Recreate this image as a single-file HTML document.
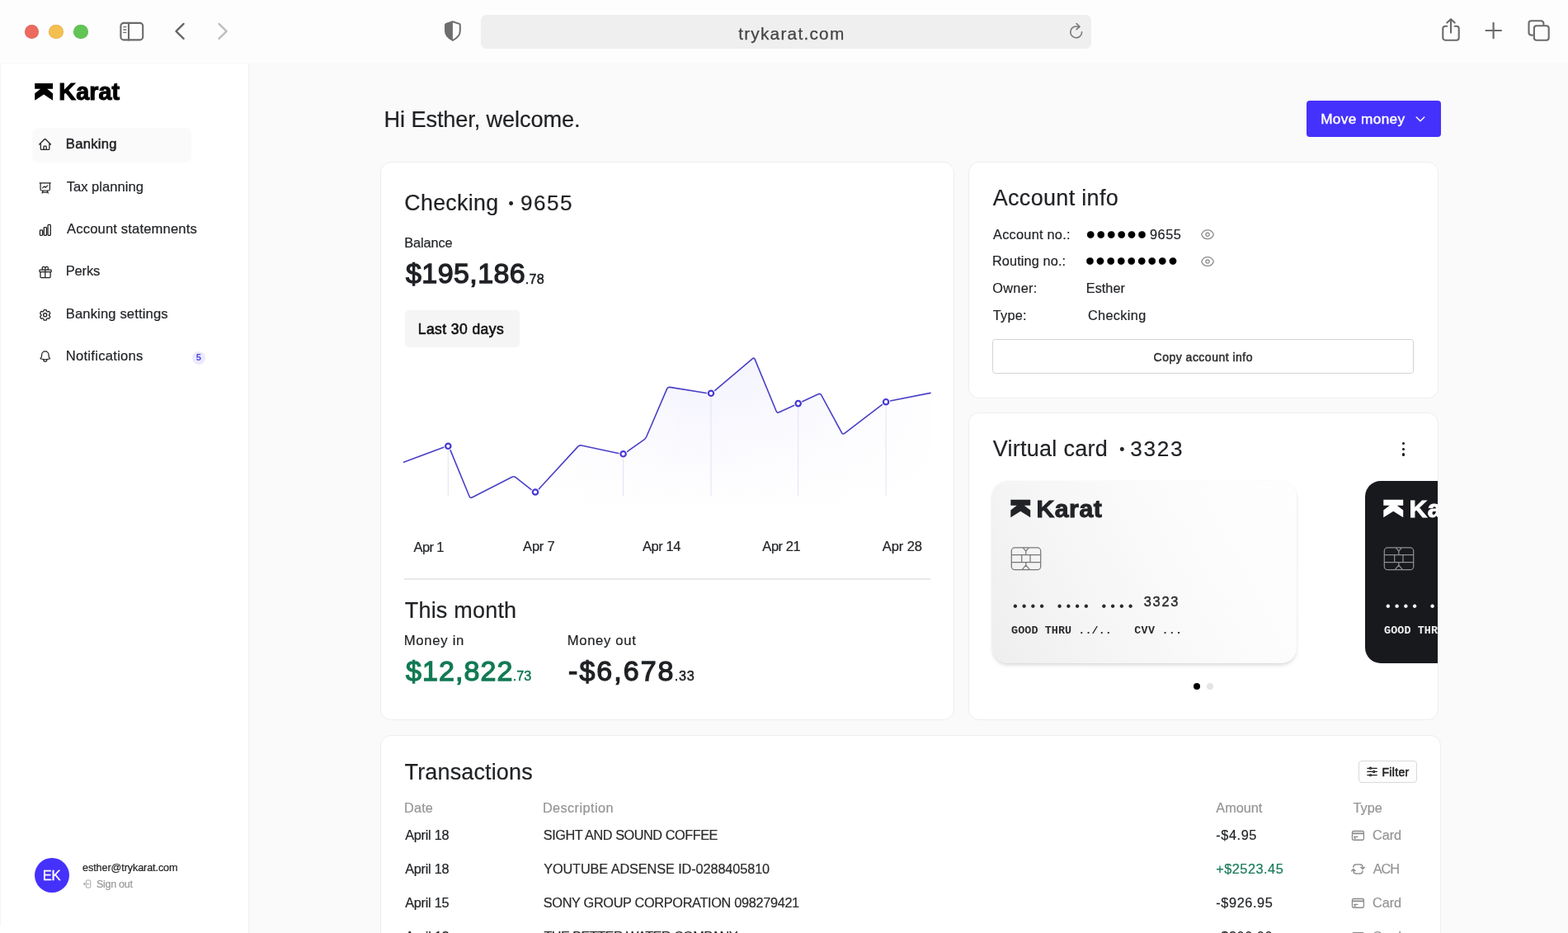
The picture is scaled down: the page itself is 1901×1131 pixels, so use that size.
<!DOCTYPE html>
<html lang="en">
<head>
<meta charset="utf-8">
<title>Karat - Banking</title>
<style>
*{box-sizing:border-box;margin:0;padding:0}
html,body{width:1901px;height:1131px;overflow:hidden}
body{position:relative;background:#fafafa;font-family:"Liberation Sans",Arial,sans-serif;color:#1f2124;-webkit-font-smoothing:antialiased}
.t{position:absolute;white-space:pre;line-height:1;display:block;font-weight:400;text-decoration:none}
.ic{position:absolute;display:block;overflow:visible}
.abs{position:absolute}
.page{position:absolute;left:0;top:0;width:1901px;height:1131px;overflow:hidden;will-change:transform}
.chrome{position:absolute;left:0;top:0;width:1901px;height:76px;background:#fdfdfd}
.sidebar{position:absolute;left:0;top:76px;width:302px;height:1055px;background:#fff;border-right:1px solid #f0f0f0;border-top:1px solid #f8f8f8}
.main{position:absolute;left:302px;top:76px;width:1599px;height:1055px;background:#fafafa}
.card{position:absolute;background:#fff;border:1px solid #eeeeee;border-radius:13px}
</style>
</head>
<body>
<div class="page">

<header class="chrome">
<div class="abs" style="left:29.9px;top:29.6px;width:17.6px;height:17.6px;border-radius:50%;background:#ed6a5e;box-shadow:inset 0 0 0 .5px rgba(0,0,0,.12)"></div>
<div class="abs" style="left:59.4px;top:29.6px;width:17.6px;height:17.6px;border-radius:50%;background:#f5bf4f;box-shadow:inset 0 0 0 .5px rgba(0,0,0,.12)"></div>
<div class="abs" style="left:89px;top:29.6px;width:17.6px;height:17.6px;border-radius:50%;background:#61c554;box-shadow:inset 0 0 0 .5px rgba(0,0,0,.12)"></div>
<svg class="ic" style="left:144px;top:25px" width="32" height="26" viewBox="144 25 32 26" fill="none" stroke="#6b6b6b" stroke-width="2.1" stroke-linecap="round"><rect x="146.4" y="27.9" width="26.8" height="20.5" rx="3.6"/><path d="M156 27.9V48.4"/><path d="M149.8 32.7H152.8M149.8 36H152.8M149.8 39.4H152.8" stroke-width="1.3"/></svg>
<svg class="ic" style="left:205px;top:25px" width="26" height="26" viewBox="205 25 26 26" fill="none" stroke="#666" stroke-width="2.3" stroke-linecap="round" stroke-linejoin="round"><path d="M222.6 28.9L213.5 37.9L222.6 46.9"/></svg>
<svg class="ic" style="left:257px;top:25px" width="26" height="26" viewBox="257 25 26 26" fill="none" stroke="#bdbdbd" stroke-width="2.3" stroke-linecap="round" stroke-linejoin="round"><path d="M265.5 28.9L274.6 37.9L265.5 46.9"/></svg>
<svg class="ic" style="left:536px;top:23px" width="26" height="30" viewBox="536 23 26 30"><path d="M548.9 26.2L556.9 28.9Q557.8 29.2 557.8 30.2V37.6C557.8 42.6 554.2 46.4 548.9 48.9C543.6 46.4 540 42.6 540 37.6V30.2Q540 29.2 540.9 28.9Z" fill="none" stroke="#6e6e6e" stroke-width="2" stroke-linejoin="round"/><path d="M548.9 26.2L540.9 28.9Q540 29.2 540 30.2V37.6C540 42.6 543.6 46.4 548.9 48.9Z" fill="#6e6e6e"/></svg>
<div class="abs" style="left:583.3px;top:18px;width:739.5px;height:41px;border-radius:7px;background:#efefef"></div>
<span class="t" style="left:895.14px;top:31.00px;font-size:20.8px;letter-spacing:1.245px;-webkit-text-stroke:0.25px currentColor;color:#444;">trykarat.com</span>
<svg class="ic" style="left:1294px;top:26px" width="22" height="24" viewBox="1294 26 22 24" fill="none" stroke="#777" stroke-width="1.6" stroke-linecap="round" stroke-linejoin="round"><path d="M1311.6 38.9A6.9 6.9 0 1 1 1307.6 32.6"/><path d="M1305.2 28.6L1309 32.3L1305 35.6"/></svg>
<svg class="ic" style="left:1745px;top:20px" width="28" height="32" viewBox="1745 20 28 32" fill="none" stroke="#6b6b6b" stroke-width="2.1" stroke-linecap="round" stroke-linejoin="round"><path d="M1754.3 31.7H1752.2A2.9 2.9 0 0 0 1749.3 34.6V45.8A2.9 2.9 0 0 0 1752.2 48.7H1765.8A2.9 2.9 0 0 0 1768.7 45.8V34.6A2.9 2.9 0 0 0 1765.8 31.7H1763.7"/><path d="M1759 39.6V23.4M1754.3 27.6L1759 23.2L1763.7 27.6"/></svg>
<svg class="ic" style="left:1798px;top:25px" width="26" height="26" viewBox="1798 25 26 26" fill="none" stroke="#6b6b6b" stroke-width="2.2" stroke-linecap="round"><path d="M1801.5 37H1820M1810.6 27.9V46.2"/></svg>
<svg class="ic" style="left:1850px;top:22px" width="32" height="30" viewBox="1850 22 32 30" fill="none" stroke="#6b6b6b" stroke-width="2.1" stroke-linejoin="round"><path d="M1858.8 42.6H1856.5A3 3 0 0 1 1853.5 39.6V28.3A3 3 0 0 1 1856.5 25.3H1868.4A3 3 0 0 1 1871.4 28.3V30.6"/><rect x="1859.9" y="31.3" width="17.8" height="17.4" rx="3"/></svg>
</header>
<aside class="sidebar">
<div class="abs" style="left:0;top:0;width:1px;height:1045px;background:#f4f4f4"></div>
<svg class="ic" style="left:41px;top:23px" width="24" height="23" viewBox="41 100 24 23" ><g transform="translate(42.2 101.1) scale(1.0000 1.0000)"><polygon points="0,0 21.8,0 21.8,6.7 15,6.7 21.8,12.2 21.8,20.7 10.9,13.5 0,20.7 0,12.2 6.8,6.7 0,6.7" fill="#000"/></g></svg>
<div class="t" style="left:71.35px;top:20.00px;font-size:28.6px;letter-spacing:0.171px;font-weight:700;-webkit-text-stroke:1.1px currentColor;color:#000;">Karat</div>
<nav>
<div class="abs" style="left:39px;top:78px;width:193px;height:41.5px;border-radius:8px;background:#fafafa"></div>
<svg class="ic" style="left:45px;top:88px" width="20" height="20" viewBox="0 0 20 20" fill="none" stroke="#222" stroke-width="1.8" stroke-linecap="round" stroke-linejoin="round"><g transform="translate(1.132 1.606) scale(0.7047)"><path d="m2.25 12 8.954-8.955c.44-.439 1.152-.439 1.591 0L21.75 12M4.5 9.75v10.125c0 .621.504 1.125 1.125 1.125H9.75v-4.875c0-.621.504-1.125 1.125-1.125h2.25c.621 0 1.125.504 1.125 1.125V21h4.125c.621 0 1.125-.504 1.125-1.125V9.75M8.25 21h8.25"/></g></svg>
<a class="t" style="left:79.87px;top:90.00px;font-size:16.6px;letter-spacing:0.257px;-webkit-text-stroke:0.5px currentColor;color:#1f2124;">Banking</a>
<svg class="ic" style="left:45px;top:141px" width="20" height="20" viewBox="0 0 20 20" fill="none" stroke="#222" stroke-width="1.8" stroke-linecap="round" stroke-linejoin="round"><g transform="translate(1.528 1.763) scale(0.6815)"><path d="M3.75 3v11.25A2.25 2.25 0 0 0 6 16.5h2.25M3.75 3h-1.5m1.5 0h16.5m0 0h1.5m-1.5 0v11.25A2.25 2.25 0 0 1 18 16.5h-2.25m-7.5 0h7.5m-7.5 0-1 3m8.5-3 1 3m0 0 .5 1.5m-.5-1.5h-9.5m0 0-.5 1.5m.75-9 3-3 2.148 2.148A12.061 12.061 0 0 1 16.5 7.605"/></g></svg>
<a class="t" style="left:80.64px;top:142.00px;font-size:16.6px;letter-spacing:0.013px;-webkit-text-stroke:0.2px currentColor;color:#1f2124;">Tax planning</a>
<svg class="ic" style="left:45px;top:192px" width="21" height="21" viewBox="0 0 21 21" fill="none" stroke="#222" stroke-width="1.8" stroke-linecap="round" stroke-linejoin="round"><g transform="translate(1.289 1.313) scale(0.7136)"><path d="M3 13.125C3 12.504 3.504 12 4.125 12h2.25c.621 0 1.125.504 1.125 1.125v6.75C7.5 20.496 6.996 21 6.375 21h-2.25A1.125 1.125 0 0 1 3 19.875v-6.75ZM9.75 8.625c0-.621.504-1.125 1.125-1.125h2.25c.621 0 1.125.504 1.125 1.125v11.25c0 .621-.504 1.125-1.125 1.125h-2.25a1.125 1.125 0 0 1-1.125-1.125V8.625ZM16.5 4.125c0-.621.504-1.125 1.125-1.125h2.25C20.496 3 21 3.504 21 4.125v15.75c0 .621-.504 1.125-1.125 1.125h-2.25a1.125 1.125 0 0 1-1.125-1.125V4.125Z"/></g></svg>
<a class="t" style="left:81.10px;top:193.00px;font-size:16.6px;letter-spacing:0.151px;-webkit-text-stroke:0.2px currentColor;color:#1f2124;">Account statemnents</a>
<svg class="ic" style="left:45px;top:243px" width="20" height="20" viewBox="0 0 20 20" fill="none" stroke="#222" stroke-width="1.8" stroke-linecap="round" stroke-linejoin="round"><g transform="translate(1.340 1.794) scale(0.7041)"><path d="M21 11.25v8.25a1.5 1.5 0 0 1-1.5 1.5H5.25a1.5 1.5 0 0 1-1.5-1.5v-8.25M12 4.875A2.625 2.625 0 1 0 9.375 7.5H12m0-2.625V7.5m0-2.625A2.625 2.625 0 1 1 14.625 7.5H12m0 0V21m-8.625-9.75h18c.621 0 1.125-.504 1.125-1.125v-1.5c0-.621-.504-1.125-1.125-1.125h-18c-.621 0-1.125.504-1.125 1.125v1.5c0 .621.504 1.125 1.125 1.125Z"/></g></svg>
<a class="t" style="left:79.69px;top:244.00px;font-size:16.6px;letter-spacing:-0.209px;-webkit-text-stroke:0.2px currentColor;color:#1f2124;">Perks</a>
<svg class="ic" style="left:45px;top:295px" width="20" height="20" viewBox="0 0 20 20" fill="none" stroke="#222" stroke-width="1.8" stroke-linecap="round" stroke-linejoin="round"><g transform="translate(1.266 1.417) scale(0.7045)"><path d="M9.594 3.94c.09-.542.56-.94 1.11-.94h2.593c.55 0 1.02.398 1.11.94l.213 1.281c.063.374.313.686.645.87.074.04.147.083.22.127.325.196.72.257 1.075.124l1.217-.456a1.125 1.125 0 0 1 1.37.49l1.296 2.247a1.125 1.125 0 0 1-.26 1.431l-1.003.827c-.293.241-.438.613-.43.992a7.723 7.723 0 0 1 0 .255c-.008.378.137.75.43.991l1.004.827c.424.35.534.955.26 1.43l-1.298 2.247a1.125 1.125 0 0 1-1.369.491l-1.217-.456c-.355-.133-.75-.072-1.076.124a6.47 6.47 0 0 1-.22.128c-.331.183-.581.495-.644.869l-.213 1.281c-.09.543-.56.94-1.11.94h-2.594c-.55 0-1.019-.398-1.11-.94l-.213-1.281c-.062-.374-.312-.686-.644-.87a6.52 6.52 0 0 1-.22-.127c-.325-.196-.72-.257-1.076-.124l-1.217.456a1.125 1.125 0 0 1-1.369-.49l-1.297-2.247a1.125 1.125 0 0 1 .26-1.431l1.004-.827c.292-.24.437-.613.43-.991a6.932 6.932 0 0 1 0-.255c.007-.38-.138-.751-.43-.992l-1.004-.827a1.125 1.125 0 0 1-.26-1.43l1.297-2.247a1.125 1.125 0 0 1 1.37-.491l1.216.456c.356.133.751.072 1.076-.124.072-.044.146-.086.22-.128.332-.183.582-.495.644-.869l.214-1.28Z"/><path d="M15 12a3 3 0 1 1-6 0 3 3 0 0 1 6 0Z"/></g></svg>
<a class="t" style="left:79.68px;top:296.00px;font-size:16.6px;letter-spacing:0.143px;-webkit-text-stroke:0.2px currentColor;color:#1f2124;">Banking settings</a>
<svg class="ic" style="left:45px;top:345px" width="20" height="20" viewBox="0 0 20 20" fill="none" stroke="#222" stroke-width="1.8" stroke-linecap="round" stroke-linejoin="round"><g transform="translate(1.475 1.791) scale(0.6941)"><path d="M14.857 17.082a23.848 23.848 0 0 0 5.454-1.31A8.967 8.967 0 0 1 18 9.75V9A6 6 0 0 0 6 9v.75a8.967 8.967 0 0 1-2.312 6.022c1.733.64 3.56 1.085 5.455 1.31m5.714 0a24.255 24.255 0 0 1-5.714 0m5.714 0a3 3 0 1 1-5.714 0"/></g></svg>
<a class="t" style="left:79.69px;top:347.00px;font-size:16.6px;letter-spacing:0.279px;-webkit-text-stroke:0.2px currentColor;color:#1f2124;">Notifications</a>
<div class="abs" style="left:232.8px;top:348.6px;width:16px;height:16px;border-radius:50%;background:#eceafd"></div>
<span class="t" style="left:237.73px;top:351.00px;font-size:11.2px;font-weight:700;color:#4f46e5;">5</span>
</nav>
<div class="abs" style="left:41.8px;top:963px;width:42.3px;height:42.3px;border-radius:50%;background:#4531fc"></div>
<span class="t" style="left:51.63px;top:977.00px;font-size:16.6px;letter-spacing:-0.133px;-webkit-text-stroke:0.3px currentColor;color:#fff;">EK</span>
<span class="t" style="left:100.05px;top:969.00px;font-size:12.6px;letter-spacing:-0.088px;-webkit-text-stroke:0.2px currentColor;color:#222;">esther@trykarat.com</span>
<svg class="ic" style="left:99px;top:987px" width="16" height="16" viewBox="0 0 16 16" fill="none" stroke="#a0a0a0" stroke-width="1.9" stroke-linecap="round" stroke-linejoin="round"><g transform="translate(1.258 1.495) scale(0.5050)"><path d="M8.25 9V5.25A2.25 2.25 0 0 1 10.5 3h6a2.25 2.25 0 0 1 2.25 2.25v13.5A2.25 2.25 0 0 1 16.5 21h-6a2.25 2.25 0 0 1-2.25-2.25V15m-3 0-3-3m0 0 3-3m-3 3H15"/></g></svg>
<span class="t" style="left:116.88px;top:989.00px;font-size:12.6px;letter-spacing:-0.306px;-webkit-text-stroke:0.2px currentColor;color:#999;">Sign out</span>
</aside>
<main class="main">
<h1 class="t" style="left:163.57px;top:55.00px;font-size:27.2px;letter-spacing:-0.126px;-webkit-text-stroke:0.2px currentColor;">Hi Esther, welcome.</h1>
<div class="abs" style="left:1282px;top:46px;width:163px;height:44px;border-radius:4px;background:#4531fc"></div>
<span class="t" style="left:1299.14px;top:60.00px;font-size:17.2px;letter-spacing:0.403px;-webkit-text-stroke:0.4px currentColor;color:#fff;">Move money</span>
<svg class="ic" style="left:1413px;top:63px" width="14" height="11" viewBox="1715 139 14 11" ><path d="M1717.2 141.9L1722 146.8L1726.8 141.9" fill="none" stroke="#fff" stroke-width="1.4" stroke-linecap="round" stroke-linejoin="round"/></svg>
<section class="card" style="left:159px;top:120px;width:696px;height:677px">
<h2 class="t" style="left:28.23px;top:36.00px;font-size:26.8px;letter-spacing:0.326px;-webkit-text-stroke:0.2px currentColor;">Checking</h2>
<span class="t" style="left:154.46px;top:42.00px;font-size:17.7px;-webkit-text-stroke:0.2px currentColor;">•</span>
<span class="t" style="left:168.95px;top:36.00px;font-size:26.2px;letter-spacing:1.467px;-webkit-text-stroke:0.2px currentColor;">9655</span>
<span class="t" style="left:28.23px;top:89.00px;font-size:16.3px;letter-spacing:-0.086px;-webkit-text-stroke:0.2px currentColor;">Balance</span>
<span class="t" style="left:29.99px;top:117.00px;font-size:34px;letter-spacing:0.415px;-webkit-text-stroke:1.3px currentColor;">$195,186</span>
<span class="t" style="left:174.86px;top:133.00px;font-size:16.2px;letter-spacing:0.206px;-webkit-text-stroke:0.5px currentColor;">.78</span>
<div class="abs" style="left:28.5px;top:179.3px;width:139px;height:44.5px;border-radius:5px;background:#f5f5f5"></div>
<span class="t" style="left:44.74px;top:194.00px;font-size:17.5px;letter-spacing:0.428px;-webkit-text-stroke:0.6px currentColor;color:#111;">Last 30 days</span>
<svg class="ic" style="left:18px;top:228px" width="660" height="200" viewBox="0 0 660 200"><defs><linearGradient id="ga" x1="0" y1="0" x2="0" y2="1"><stop offset="0" stop-color="#4f46e5" stop-opacity="0.07"/><stop offset="0.55" stop-color="#4f46e5" stop-opacity="0.03"/><stop offset="1" stop-color="#4f46e5" stop-opacity="0"/></linearGradient><linearGradient id="gh" x1="0" y1="0" x2="1" y2="0"><stop offset="0" stop-color="#fff" stop-opacity="1"/><stop offset="0.2" stop-color="#fff" stop-opacity="0.85"/><stop offset="0.55" stop-color="#fff" stop-opacity="0"/><stop offset="0.75" stop-color="#fff" stop-opacity="0.3"/><stop offset="1" stop-color="#fff" stop-opacity="0.9"/></linearGradient></defs><path d="M9.50 135.30L61.23 115.88Q63.66 114.97 64.65 117.38L89.08 176.79Q90.07 179.20 92.38 178.01L140.75 153.29Q143.07 152.10 145.12 153.70L167.02 170.78Q169.07 172.38 170.83 170.47L220.64 116.40Q222.40 114.49 224.95 115.03L273.16 125.27Q275.71 125.81 277.83 124.31L300.65 108.13Q302.77 106.62 303.80 104.23L328.59 46.39Q329.61 44.00 332.18 44.41L379.58 51.92Q382.15 52.32 384.13 50.64L432.26 9.86Q434.25 8.18 435.24 10.58L461.17 73.47Q462.16 75.87 464.52 74.78L485.34 65.19Q487.70 64.10 490.06 63.00L512.12 52.66Q514.48 51.55 515.72 53.84L540.56 99.68Q541.79 101.97 543.86 100.38L591.91 63.51Q593.98 61.93 596.53 61.43L648.00 51.40L648.0 195L9.5 195Z" fill="url(#ga)"/><path d="M9.50 135.30L61.23 115.88Q63.66 114.97 64.65 117.38L89.08 176.79Q90.07 179.20 92.38 178.01L140.75 153.29Q143.07 152.10 145.12 153.70L167.02 170.78Q169.07 172.38 170.83 170.47L220.64 116.40Q222.40 114.49 224.95 115.03L273.16 125.27Q275.71 125.81 277.83 124.31L300.65 108.13Q302.77 106.62 303.80 104.23L328.59 46.39Q329.61 44.00 332.18 44.41L379.58 51.92Q382.15 52.32 384.13 50.64L432.26 9.86Q434.25 8.18 435.24 10.58L461.17 73.47Q462.16 75.87 464.52 74.78L485.34 65.19Q487.70 64.10 490.06 63.00L512.12 52.66Q514.48 51.55 515.72 53.84L540.56 99.68Q541.79 101.97 543.86 100.38L591.91 63.51Q593.98 61.93 596.53 61.43L648.00 51.40L648.0 195L9.5 195Z" fill="url(#gh)"/><line x1="63.3" y1="115.8" x2="63.3" y2="176" stroke="#e3e1f4" stroke-width="1"/><line x1="169.0" y1="171.5" x2="169.0" y2="176" stroke="#e3e1f4" stroke-width="1"/><line x1="275.6" y1="125.3" x2="275.6" y2="176" stroke="#e3e1f4" stroke-width="1"/><line x1="382.0" y1="51.8" x2="382.0" y2="176" stroke="#e3e1f4" stroke-width="1"/><line x1="487.7" y1="64.1" x2="487.7" y2="176" stroke="#e3e1f4" stroke-width="1"/><line x1="594.1" y1="62.2" x2="594.1" y2="176" stroke="#e3e1f4" stroke-width="1"/><path d="M9.50 135.30L61.23 115.88Q63.66 114.97 64.65 117.38L89.08 176.79Q90.07 179.20 92.38 178.01L140.75 153.29Q143.07 152.10 145.12 153.70L167.02 170.78Q169.07 172.38 170.83 170.47L220.64 116.40Q222.40 114.49 224.95 115.03L273.16 125.27Q275.71 125.81 277.83 124.31L300.65 108.13Q302.77 106.62 303.80 104.23L328.59 46.39Q329.61 44.00 332.18 44.41L379.58 51.92Q382.15 52.32 384.13 50.64L432.26 9.86Q434.25 8.18 435.24 10.58L461.17 73.47Q462.16 75.87 464.52 74.78L485.34 65.19Q487.70 64.10 490.06 63.00L512.12 52.66Q514.48 51.55 515.72 53.84L540.56 99.68Q541.79 101.97 543.86 100.38L591.91 63.51Q593.98 61.93 596.53 61.43L648.00 51.40" fill="none" stroke="#4a40c6" stroke-width="1.6" stroke-linejoin="round" stroke-linecap="round"/><circle cx="63.3" cy="115.8" r="5.2" fill="#fff"/><circle cx="63.3" cy="115.8" r="3.2" fill="#fff" stroke="#4839d4" stroke-width="2.2"/><circle cx="169.0" cy="171.5" r="5.2" fill="#fff"/><circle cx="169.0" cy="171.5" r="3.2" fill="#fff" stroke="#4839d4" stroke-width="2.2"/><circle cx="275.6" cy="125.3" r="5.2" fill="#fff"/><circle cx="275.6" cy="125.3" r="3.2" fill="#fff" stroke="#4839d4" stroke-width="2.2"/><circle cx="382.0" cy="51.8" r="5.2" fill="#fff"/><circle cx="382.0" cy="51.8" r="3.2" fill="#fff" stroke="#4839d4" stroke-width="2.2"/><circle cx="487.7" cy="64.1" r="5.2" fill="#fff"/><circle cx="487.7" cy="64.1" r="3.2" fill="#fff" stroke="#4839d4" stroke-width="2.2"/><circle cx="594.1" cy="62.2" r="5.2" fill="#fff"/><circle cx="594.1" cy="62.2" r="3.2" fill="#fff" stroke="#4839d4" stroke-width="2.2"/></svg>
<span class="t" style="left:39.51px;top:458.00px;font-size:16.5px;letter-spacing:-0.616px;-webkit-text-stroke:0.2px currentColor;">Apr 1</span>
<span class="t" style="left:172.10px;top:457.00px;font-size:16.5px;letter-spacing:-0.211px;-webkit-text-stroke:0.2px currentColor;">Apr 7</span>
<span class="t" style="left:316.95px;top:457.00px;font-size:16.5px;letter-spacing:-0.424px;-webkit-text-stroke:0.2px currentColor;">Apr 14</span>
<span class="t" style="left:462.33px;top:457.00px;font-size:16.5px;letter-spacing:-0.456px;-webkit-text-stroke:0.2px currentColor;">Apr 21</span>
<span class="t" style="left:607.72px;top:457.00px;font-size:16.5px;letter-spacing:-0.062px;-webkit-text-stroke:0.2px currentColor;">Apr 28</span>
<div class="abs" style="left:28.30000000000001px;top:504.29999999999995px;width:637.3px;height:1.4px;background:#e9e9e9"></div>
<h3 class="t" style="left:28.72px;top:530.00px;font-size:27px;letter-spacing:0.204px;-webkit-text-stroke:0.2px currentColor;">This month</h3>
<span class="t" style="left:27.64px;top:572.00px;font-size:16.7px;letter-spacing:0.719px;-webkit-text-stroke:0.2px currentColor;">Money in</span>
<span class="t" style="left:225.64px;top:572.00px;font-size:16.7px;letter-spacing:0.671px;-webkit-text-stroke:0.2px currentColor;">Money out</span>
<span class="t" style="left:29.99px;top:599.00px;font-size:34px;letter-spacing:1.081px;-webkit-text-stroke:1.3px currentColor;color:#127a54;">$12,822</span>
<span class="t" style="left:159.69px;top:614.00px;font-size:16.2px;letter-spacing:-0.010px;-webkit-text-stroke:0.5px currentColor;color:#127a54;">.73</span>
<span class="t" style="left:227.07px;top:599.00px;font-size:34px;letter-spacing:2.014px;-webkit-text-stroke:1.3px currentColor;">-$6,678</span>
<span class="t" style="left:355.86px;top:614.00px;font-size:16.2px;letter-spacing:0.731px;-webkit-text-stroke:0.5px currentColor;">.33</span>
</section>
<section class="card" style="left:872px;top:120px;width:570px;height:287px">
<h2 class="t" style="left:28.69px;top:30.00px;font-size:27px;letter-spacing:0.316px;-webkit-text-stroke:0.2px currentColor;">Account info</h2>
<span class="t" style="left:29.07px;top:79.00px;font-size:16.3px;letter-spacing:0.263px;-webkit-text-stroke:0.2px currentColor;">Account no.:</span>
<span class="t" style="left:141.36px;top:77.00px;font-size:19.8px;letter-spacing:0.493px;-webkit-text-stroke:0.2px currentColor;color:#000;">●●●●●●</span>
<span class="t" style="left:218.90px;top:79.00px;font-size:16.3px;letter-spacing:0.601px;-webkit-text-stroke:0.2px currentColor;">9655</span>
<svg class="ic" style="left:279px;top:77px" width="21" height="21" viewBox="0 0 21 21" fill="none" stroke="#8a8a8a" stroke-width="1.7" stroke-linecap="round" stroke-linejoin="round"><g transform="translate(1.334 1.540) scale(0.7262)"><path d="M2.036 12.322a1.012 1.012 0 0 1 0-.639C3.423 7.51 7.36 4.5 12 4.5c4.638 0 8.573 3.007 9.963 7.178.07.207.07.431 0 .639C20.577 16.49 16.64 19.5 12 19.5c-4.638 0-8.573-3.007-9.963-7.178Z"/><path d="M15 12a3 3 0 1 1-6 0 3 3 0 0 1 6 0Z"/></g></svg>
<span class="t" style="left:27.89px;top:111.00px;font-size:16.3px;letter-spacing:0.133px;-webkit-text-stroke:0.2px currentColor;">Routing no.:</span>
<span class="t" style="left:140.54px;top:109.00px;font-size:19.8px;letter-spacing:0.600px;-webkit-text-stroke:0.2px currentColor;color:#000;">●●●●●●●●●</span>
<svg class="ic" style="left:279px;top:110px" width="21" height="21" viewBox="0 0 21 21" fill="none" stroke="#8a8a8a" stroke-width="1.7" stroke-linecap="round" stroke-linejoin="round"><g transform="translate(1.381 1.358) scale(0.7228)"><path d="M2.036 12.322a1.012 1.012 0 0 1 0-.639C3.423 7.51 7.36 4.5 12 4.5c4.638 0 8.573 3.007 9.963 7.178.07.207.07.431 0 .639C20.577 16.49 16.64 19.5 12 19.5c-4.638 0-8.573-3.007-9.963-7.178Z"/><path d="M15 12a3 3 0 1 1-6 0 3 3 0 0 1 6 0Z"/></g></svg>
<span class="t" style="left:28.33px;top:144.00px;font-size:16.3px;letter-spacing:0.280px;-webkit-text-stroke:0.2px currentColor;">Owner:</span>
<span class="t" style="left:141.82px;top:144.00px;font-size:16.3px;letter-spacing:0.012px;-webkit-text-stroke:0.2px currentColor;">Esther</span>
<span class="t" style="left:28.80px;top:177.00px;font-size:16.3px;letter-spacing:0.214px;-webkit-text-stroke:0.2px currentColor;">Type:</span>
<span class="t" style="left:143.99px;top:177.00px;font-size:16.3px;letter-spacing:0.339px;-webkit-text-stroke:0.2px currentColor;">Checking</span>
<div class="abs" style="left:28.299999999999955px;top:214.3px;width:510.5px;height:41.6px;border-radius:3.5px;border:1.2px solid #d3d3d3;background:#fff"></div>
<span class="t" style="left:223.62px;top:229.00px;font-size:14px;letter-spacing:0.486px;-webkit-text-stroke:0.55px currentColor;color:#333;">Copy account info</span>
</section>
<section class="card" style="left:872px;top:424px;width:570px;height:373px;overflow:hidden">
<h2 class="t" style="left:28.63px;top:30.00px;font-size:27px;letter-spacing:0.284px;-webkit-text-stroke:0.2px currentColor;">Virtual card</h2>
<span class="t" style="left:182.23px;top:36.00px;font-size:17.7px;-webkit-text-stroke:0.2px currentColor;">•</span>
<span class="t" style="left:195.25px;top:30.00px;font-size:26.2px;letter-spacing:1.664px;-webkit-text-stroke:0.2px currentColor;">3323</span>
<div class="abs" style="left:525.0px;top:34.9px;width:3.4px;height:3.4px;border-radius:50%;background:#111"></div>
<div class="abs" style="left:525.0px;top:41.6px;width:3.4px;height:3.4px;border-radius:50%;background:#111"></div>
<div class="abs" style="left:525.0px;top:48.3px;width:3.4px;height:3.4px;border-radius:50%;background:#111"></div>
<div class="abs" style="left:28.0px;top:82.0px;width:368.5px;height:221px;border-radius:19px;background:linear-gradient(62deg,#eeeeee 0%,#f5f5f5 30%,#fbfbfb 62%,#fefefe 100%);box-shadow:0 3px 5px -1px rgba(0,0,0,.16),0 0 2px rgba(0,0,0,.05);"><svg class="ic" style="left:21px;top:21px" width="27" height="25" viewBox="1224 604 27 25" ><g transform="translate(1225.3 605.7) scale(1.0963 1.0435)"><polygon points="0,0 21.8,0 21.8,6.7 15,6.7 21.8,12.2 21.8,20.7 10.9,13.5 0,20.7 0,12.2 6.8,6.7 0,6.7" fill="#222326"/></g></svg><span class="t" style="left:53.44px;top:19.00px;font-size:30.2px;letter-spacing:0.535px;font-weight:700;-webkit-text-stroke:1.0px currentColor;color:#222326;">Karat</span><svg class="ic" style="left:21px;top:79px" width="40" height="31" viewBox="1224 662 40 31" ><g transform="translate(1225.8 663.4)" fill="none" stroke="#777" stroke-width="1.25" stroke-linejoin="round"><rect x="0.5" y="0.5" width="35.4" height="26.8" rx="4"/><path d="M0.5 9.2H17.6M22.6 9.2H35.9M0.5 18.3H35.9M12.9 9.2V18.3M23.2 9.2V18.3M14.6 0.7L18 4.8L21.4 0.7M18 4.8V9.2H22.6M18 18.3V21.8M13.3 27.2L18 21.8L22.7 27.2"/></g></svg><span class="t" style="left:23.01px;top:145.00px;font-size:16.2px;letter-spacing:1.028px;font-family:'Liberation Mono',monospace;color:#2b2b2e;">•••• •••• ••••</span><span class="t" style="left:183.73px;top:138.00px;font-size:16.4px;letter-spacing:1.754px;-webkit-text-stroke:0.45px currentColor;color:#2b2b2e;">3323</span><span class="t" style="left:23.04px;top:175.00px;font-size:13.4px;letter-spacing:0.094px;font-weight:700;font-family:'Liberation Mono',monospace;color:#2b2b2e;">GOOD THRU ../..</span><span class="t" style="left:172.30px;top:175.00px;font-size:13.4px;letter-spacing:0.258px;font-weight:700;font-family:'Liberation Mono',monospace;color:#2b2b2e;">CVV ...</span></div>
<div class="abs" style="left:480.0px;top:82.0px;width:368.5px;height:221px;border-radius:19px;background:#18191c;"><svg class="ic" style="left:21px;top:21px" width="27" height="25" viewBox="1676 604 27 25" ><g transform="translate(1677.3 605.7) scale(1.0963 1.0435)"><polygon points="0,0 21.8,0 21.8,6.7 15,6.7 21.8,12.2 21.8,20.7 10.9,13.5 0,20.7 0,12.2 6.8,6.7 0,6.7" fill="#fff"/></g></svg><span class="t" style="left:53.44px;top:19.00px;font-size:30.2px;letter-spacing:0.535px;font-weight:700;-webkit-text-stroke:1.0px currentColor;color:#fff;">Karat</span><svg class="ic" style="left:21px;top:79px" width="40" height="31" viewBox="1676 662 40 31" ><g transform="translate(1677.8 663.4)" fill="none" stroke="#8e8e90" stroke-width="1.25" stroke-linejoin="round"><rect x="0.5" y="0.5" width="35.4" height="26.8" rx="4"/><path d="M0.5 9.2H17.6M22.6 9.2H35.9M0.5 18.3H35.9M12.9 9.2V18.3M23.2 9.2V18.3M14.6 0.7L18 4.8L21.4 0.7M18 4.8V9.2H22.6M18 18.3V21.8M13.3 27.2L18 21.8L22.7 27.2"/></g></svg><span class="t" style="left:23.01px;top:145.00px;font-size:16.2px;letter-spacing:1.028px;font-family:'Liberation Mono',monospace;color:#f2f2f2;">•••• •••• ••••</span><span class="t" style="left:183.73px;top:138.00px;font-size:16.4px;letter-spacing:1.754px;-webkit-text-stroke:0.45px currentColor;color:#f2f2f2;">3323</span><span class="t" style="left:23.04px;top:175.00px;font-size:13.4px;letter-spacing:0.094px;font-weight:700;font-family:'Liberation Mono',monospace;color:#f2f2f2;">GOOD THRU ../..</span><span class="t" style="left:172.30px;top:175.00px;font-size:13.4px;letter-spacing:0.258px;font-weight:700;font-family:'Liberation Mono',monospace;color:#f2f2f2;">CVV ...</span></div>
<div class="abs" style="left:271.7px;top:326.8px;width:8.4px;height:8.4px;border-radius:50%;background:#000"></div>
<div class="abs" style="left:287.6px;top:326.8px;width:8.4px;height:8.4px;border-radius:50%;background:#e4e4e4"></div>
</section>
<section class="card" style="left:159px;top:815px;width:1286px;height:400px">
<h2 class="t" style="left:28.61px;top:31.00px;font-size:27px;letter-spacing:0.136px;-webkit-text-stroke:0.2px currentColor;">Transactions</h2>
<div class="abs" style="left:1185.4px;top:30.299999999999955px;width:70.59999999999991px;height:26.8px;border-radius:4px;border:1.1px solid #d9d9d9;background:#fdfdfd"></div>
<svg class="ic" style="left:1192px;top:34px" width="20" height="20" viewBox="0 0 20 20" fill="none" stroke="#222" stroke-width="1.9" stroke-linecap="round" stroke-linejoin="round"><g transform="translate(1.278 1.172) scale(0.6898)"><path d="M10.5 6h9.75M10.5 6a1.5 1.5 0 1 1-3 0m3 0a1.5 1.5 0 1 0-3 0M3.75 6H7.5m3 12h9.75m-9.75 0a1.5 1.5 0 0 1-3 0m3 0a1.5 1.5 0 0 0-3 0m-3.75 0H7.5m9-6h3.75m-3.75 0a1.5 1.5 0 0 1-3 0m3 0a1.5 1.5 0 0 0-3 0m-9.75 0h9.75"/></g></svg>
<span class="t" style="left:1213.45px;top:37.00px;font-size:14px;letter-spacing:0.332px;-webkit-text-stroke:0.55px currentColor;color:#222;">Filter</span>
<span class="t" style="left:28.12px;top:79.00px;font-size:16.3px;letter-spacing:0.139px;-webkit-text-stroke:0.2px currentColor;color:#959595;">Date</span>
<span class="t" style="left:195.89px;top:79.00px;font-size:16.3px;letter-spacing:0.413px;-webkit-text-stroke:0.2px currentColor;color:#959595;">Description</span>
<span class="t" style="left:1012.35px;top:79.00px;font-size:16.3px;letter-spacing:-0.029px;-webkit-text-stroke:0.2px currentColor;color:#959595;">Amount</span>
<span class="t" style="left:1178.52px;top:79.00px;font-size:16.3px;letter-spacing:0.013px;-webkit-text-stroke:0.2px currentColor;color:#959595;">Type</span>
<span class="t" style="left:29.21px;top:112.00px;font-size:16.3px;letter-spacing:-0.258px;-webkit-text-stroke:0.2px currentColor;">April 18</span>
<span class="t" style="left:196.78px;top:112.00px;font-size:16.3px;letter-spacing:-0.460px;-webkit-text-stroke:0.2px currentColor;color:#2b2b2b;">SIGHT AND SOUND COFFEE</span>
<span class="t" style="left:1012.30px;top:112.00px;font-size:16.3px;letter-spacing:0.593px;-webkit-text-stroke:0.2px currentColor;">-$4.95</span>
<svg class="ic" style="left:1174px;top:111px" width="21" height="21" viewBox="0 0 21 21" fill="none" stroke="#8a8a8a" stroke-width="1.8" stroke-linecap="round" stroke-linejoin="round"><g transform="translate(1.824 1.287) scale(0.7153)"><path d="M2.25 8.25h19.5M2.25 9h19.5m-16.5 5.25h6m-6 2.25h3m-3.75 3h15a2.25 2.25 0 0 0 2.25-2.25V6.75A2.25 2.25 0 0 0 19.5 4.5h-15a2.25 2.25 0 0 0-2.25 2.25v10.5A2.25 2.25 0 0 0 4.5 19.5Z"/></g></svg>
<span class="t" style="left:1201.92px;top:112.00px;font-size:16.3px;letter-spacing:-0.009px;-webkit-text-stroke:0.2px currentColor;color:#959595;">Card</span>
<span class="t" style="left:29.21px;top:153.00px;font-size:16.3px;letter-spacing:-0.258px;-webkit-text-stroke:0.2px currentColor;">April 18</span>
<span class="t" style="left:197.14px;top:153.00px;font-size:16.3px;letter-spacing:-0.103px;-webkit-text-stroke:0.2px currentColor;color:#2b2b2b;">YOUTUBE ADSENSE ID-0288405810</span>
<span class="t" style="left:1012.23px;top:153.00px;font-size:16.3px;letter-spacing:0.508px;-webkit-text-stroke:0.2px currentColor;color:#187c58;">+$2523.45</span>
<svg class="ic" style="left:1174px;top:151px" width="22" height="22" viewBox="0 0 22 22" fill="none" stroke="#8a8a8a" stroke-width="1.8" stroke-linecap="round" stroke-linejoin="round"><g transform="translate(1.461 1.475) scale(0.7508)"><path d="M19.5 12c0-1.232-.046-2.453-.138-3.662a4.006 4.006 0 0 0-3.7-3.7 48.678 48.678 0 0 0-7.324 0 4.006 4.006 0 0 0-3.7 3.7c-.017.22-.032.441-.046.662M19.5 12l3-3m-3 3-3-3m-12 3c0 1.232.046 2.453.138 3.662a4.006 4.006 0 0 0 3.7 3.7 48.656 48.656 0 0 0 7.324 0 4.006 4.006 0 0 0 3.7-3.7c.017-.22.032-.441.046-.662M4.5 12l3 3m-3-3-3 3"/></g></svg>
<span class="t" style="left:1202.73px;top:153.00px;font-size:16.3px;letter-spacing:-0.982px;-webkit-text-stroke:0.2px currentColor;color:#959595;">ACH</span>
<span class="t" style="left:29.21px;top:194.00px;font-size:16.3px;letter-spacing:-0.262px;-webkit-text-stroke:0.2px currentColor;">April 15</span>
<span class="t" style="left:196.78px;top:194.00px;font-size:16.3px;letter-spacing:-0.320px;-webkit-text-stroke:0.2px currentColor;color:#2b2b2b;">SONY GROUP CORPORATION 098279421</span>
<span class="t" style="left:1012.30px;top:194.00px;font-size:16.3px;letter-spacing:0.606px;-webkit-text-stroke:0.2px currentColor;">-$926.95</span>
<svg class="ic" style="left:1174px;top:193px" width="21" height="21" viewBox="0 0 21 21" fill="none" stroke="#8a8a8a" stroke-width="1.8" stroke-linecap="round" stroke-linejoin="round"><g transform="translate(1.824 1.287) scale(0.7153)"><path d="M2.25 8.25h19.5M2.25 9h19.5m-16.5 5.25h6m-6 2.25h3m-3.75 3h15a2.25 2.25 0 0 0 2.25-2.25V6.75A2.25 2.25 0 0 0 19.5 4.5h-15a2.25 2.25 0 0 0-2.25 2.25v10.5A2.25 2.25 0 0 0 4.5 19.5Z"/></g></svg>
<span class="t" style="left:1201.92px;top:194.00px;font-size:16.3px;letter-spacing:-0.009px;-webkit-text-stroke:0.2px currentColor;color:#959595;">Card</span>
<span class="t" style="left:29.21px;top:235.00px;font-size:16.3px;letter-spacing:-0.257px;-webkit-text-stroke:0.2px currentColor;">April 12</span>
<span class="t" style="left:197.44px;top:235.00px;font-size:16.3px;letter-spacing:-0.579px;-webkit-text-stroke:0.2px currentColor;color:#2b2b2b;">THE BETTER WATER COMPANY</span>
<span class="t" style="left:1012.30px;top:235.00px;font-size:16.3px;letter-spacing:0.566px;-webkit-text-stroke:0.2px currentColor;">-$300.00</span>
<svg class="ic" style="left:1174px;top:234px" width="21" height="21" viewBox="0 0 21 21" fill="none" stroke="#8a8a8a" stroke-width="1.8" stroke-linecap="round" stroke-linejoin="round"><g transform="translate(1.900 1.448) scale(0.7125)"><path d="M2.25 8.25h19.5M2.25 9h19.5m-16.5 5.25h6m-6 2.25h3m-3.75 3h15a2.25 2.25 0 0 0 2.25-2.25V6.75A2.25 2.25 0 0 0 19.5 4.5h-15a2.25 2.25 0 0 0-2.25 2.25v10.5A2.25 2.25 0 0 0 4.5 19.5Z"/></g></svg>
<span class="t" style="left:1201.92px;top:235.00px;font-size:16.3px;letter-spacing:-0.009px;-webkit-text-stroke:0.2px currentColor;color:#959595;">Card</span>
</section>
</main>
</div>
</body>
</html>
